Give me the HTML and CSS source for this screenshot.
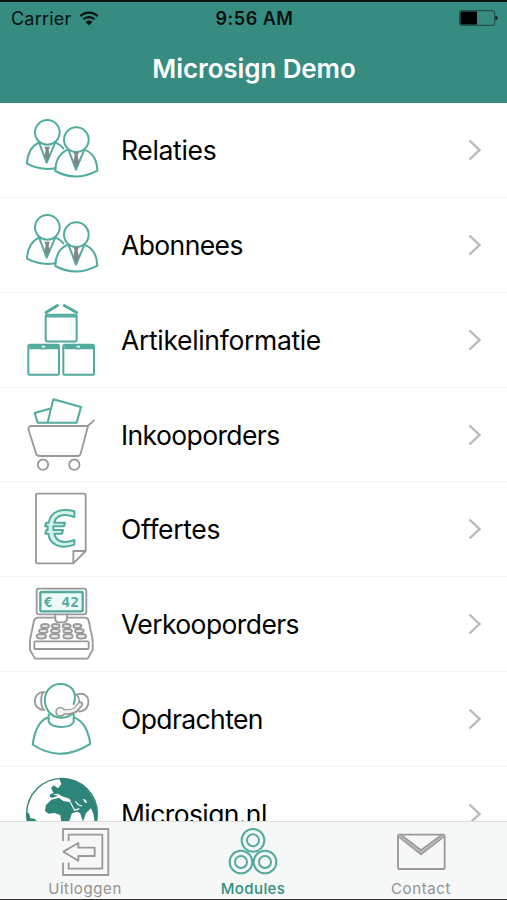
FILE: index.html
```html
<!DOCTYPE html>
<html lang="nl">
<head>
<meta charset="UTF-8">
<meta name="viewport" content="width=device-width, initial-scale=1.0">
<title>Microsign Demo</title>
<link rel="stylesheet" href="styles.css">
</head>
<body>

  <header class="header">
    <div class="status-bar">
      <div class="carrier">
        <span>Carrier</span>
        <svg class="wifi" viewBox="0 0 20 15">
          <path d="M1.4 5.1a12.2 12.2 0 0 1 17.2 0M4.5 8.3a7.8 7.8 0 0 1 11 0" fill="none" stroke="#06110f" stroke-width="2.3"/>
          <path d="M10 14.5L6.6 11a4.8 4.8 0 0 1 6.8 0z" fill="#06110f"/>
        </svg>
      </div>
      <div class="time">9:56 AM</div>
      <svg class="battery" viewBox="0 0 39 16">
        <rect x=".6" y=".6" width="35" height="14.8" rx="2.4" fill="none" stroke="#20524b" stroke-width="1.1"/>
        <path d="M3 1.5h15v13H3a1.5 1.5 0 0 1-1.5-1.5V3A1.5 1.5 0 0 1 3 1.5z" fill="#000"/>
        <path d="M36.4 5.5q2.4 1 2.4 2.5t-2.4 2.5z" fill="#0b1f1c"/>
      </svg>
    </div>
    <h1 class="title">Microsign Demo</h1>
  </header>

  <main class="list">
    <a class="row">
      <svg class="icon" viewBox="72 21 228 228">
        <g id="people" class="green">
          <circle cx="142" cy="82" r="37"/>
          <path d="M117 112C94 124 82 145 81 176Q120 197 166 190M166 112Q182 119 190 130M117 112L140 173L166 112"/>
          <path d="M133 125h17l-4 9 3 18-8 17-7-17 3-18z" class="tie"/>
          <circle cx="229" cy="104" r="37" fill="#fff"/>
          <path d="M205 133C181 143 166 165 166 198Q228 232 292 197C291 165 278 143 253 134M205 133L228 194L253 134"/>
          <path d="M220 142h17l-4 9 4 19-9 20-8-20 4-19z" class="tie"/>
        </g>
      </svg>
      <span class="label wide">Relaties</span>
      <svg class="arrow" viewBox="0 0 14 22"><path d="M1.5 1.5L11.5 11L1.5 20.5"/></svg>
    </a>

    <a class="row">
      <svg class="icon" viewBox="72 21 228 228"><use href="#people"/></svg>
      <span class="label">Abonnees</span>
      <svg class="arrow" viewBox="0 0 14 22"><path d="M1.5 1.5L11.5 11L1.5 20.5"/></svg>
    </a>

    <a class="row">
      <svg class="icon" viewBox="72 34.5 228 228">
        <g class="green">
          <rect x="137" y="73" width="93" height="80" rx="5"/>
          <path d="M139 78h89"/>
          <path d="M138 66L172 45M193 45L230 66" stroke-width="9"/>
          <rect x="85" y="163" width="92" height="90" rx="5"/>
          <rect x="190" y="163" width="92" height="90" rx="5"/>
          <path d="M88 170h37M135 170h39M193 170h37M240 170h39" stroke-width="13" stroke-linecap="butt"/>
          <path d="M125 174h10M230 174h10"/>
        </g>
      </svg>
      <span class="label wide">Artikelinformatie</span>
      <svg class="arrow" viewBox="0 0 14 22"><path d="M1.5 1.5L11.5 11L1.5 20.5"/></svg>
    </a>

    <a class="row">
      <svg class="icon" viewBox="72 34 228 228">
        <g class="green">
          <path d="M149 69L104 82L113 111H230L243 64L160 41L143 110"/>
        </g>
        <g class="gray">
          <path d="M282 104L263 121H95Q83 121 86 133L108 203Q111 211 119 211H232Q240 211 242 204L264 121"/>
          <circle cx="129" cy="237" r="15.5"/>
          <circle cx="223" cy="237" r="15.5"/>
        </g>
      </svg>
      <span class="label">Inkooporders</span>
      <svg class="arrow" viewBox="0 0 14 22"><path d="M1.5 1.5L11.5 11L1.5 20.5"/></svg>
    </a>

    <a class="row">
      <svg class="icon" viewBox="72 33 228 228">
        <g class="gray">
          <path d="M112 41H253Q257 41 257 45V213L220 250H112Q108 250 108 246V45Q108 41 112 41zM220 250V213H257"/>
        </g>
        <g class="green euro">
          <path d="M223 94V111C193 98 167 106 163 128H195L192 139H160V150H189L186 161H163C169 187 194 192 223 180V194C180 209 149 194 145 161H136L139 150H143V139H135L139 128H146C153 91 187 84 223 94z"/>
        </g>
      </svg>
      <span class="label wide">Offertes</span>
      <svg class="arrow" viewBox="0 0 14 22"><path d="M1.5 1.5L11.5 11L1.5 20.5"/></svg>
    </a>

    <a class="row">
      <svg class="icon" viewBox="72 26 228 228">
        <g class="gray">
          <rect x="110" y="34" width="149" height="77" rx="7"/>
          <path d="M166 121H114Q105 121 102 130L90 188V218L105 244H263L278 218V188L266 130Q264 121 254 121H201M166 112V126Q168 135 176 135H191Q201 134 201 126V112"/>
          <rect x="103" y="192" width="163" height="23" rx="3"/>
          <g fill="#e8e8e8">
            <ellipse cx="135" cy="146" rx="12" ry="6"/><ellipse cx="167" cy="146" rx="12" ry="6"/><ellipse cx="200" cy="146" rx="12" ry="6"/><ellipse cx="232" cy="146" rx="12" ry="6"/>
            <ellipse cx="130" cy="161" rx="13" ry="6"/><ellipse cx="166" cy="161" rx="13" ry="6"/><ellipse cx="203" cy="161" rx="13" ry="6"/><ellipse cx="238" cy="161" rx="13" ry="6"/>
            <ellipse cx="124" cy="177" rx="14" ry="7"/><ellipse cx="164" cy="177" rx="14" ry="7"/><ellipse cx="204" cy="177" rx="14" ry="7"/><ellipse cx="244" cy="177" rx="14" ry="7"/>
          </g>
        </g>
        <rect x="121" y="44" width="127" height="58" rx="3" fill="#eefaf7" stroke="#52ab9d" stroke-width="7"/>
        <text x="131" y="89" class="amount">€ 42</text>
      </svg>
      <span class="label">Verkooporders</span>
      <svg class="arrow" viewBox="0 0 14 22"><path d="M1.5 1.5L11.5 11L1.5 20.5"/></svg>
    </a>

    <a class="row">
      <svg class="icon" viewBox="72 31.5 228 228">
        <g class="gray">
          <path d="M133 65C95 62 95 120 133 118M128 67Q118 92 129 116M229 73C272 55 279 120 238 123M231 75Q239 84 238 94"/>
        </g>
        <g class="green">
          <path d="M221 124C206 145 165 151 145 122C127 97 134 65 151 51C171 35 202 38 217 56C227 68 227 82 221 101"/>
          <path d="M146 140Q108 151 98 222Q180 278 271 220C263 170 246 151 221 140M146 132V154C157 175 211 174 221 154V132"/>
        </g>
        <path d="M241 101L227 118Q215 126 187 124" fill="none" stroke="#999" stroke-width="17" stroke-linecap="round"/>
        <circle cx="181" cy="124" r="13" fill="#f6f6f6" stroke="#999" stroke-width="5"/>
        <path d="M240 102L226 117Q213 125 183 124" fill="none" stroke="#f2f2f2" stroke-width="8" stroke-linecap="round"/>
      </svg>
      <span class="label">Opdrachten</span>
      <svg class="arrow" viewBox="0 0 14 22"><path d="M1.5 1.5L11.5 11L1.5 20.5"/></svg>
    </a>

    <a class="row">
      <svg class="icon" viewBox="72 40 228 228">
        <circle cx="186" cy="153" r="106" fill="#fff" stroke="#2c8578" stroke-width="4"/>
        <g fill="#2c8578">
          <path d="M178 48C233 42 279 83 291 139V190H286L280 153L273 137L258 151L249 177L240 151L231 147L216 152L207 177V190H185L181 157L163 151L145 153L135 145L138 127L154 111L177 105L190 115L210 119L213 113L191 104L178 97L158 105L149 103L151 94L161 91L153 77L161 68L174 77L184 65z"/>
          <path d="M79 148L88 153L91 167L104 168L114 181V190H84Q78 168 79 148z"/>
        </g>
        <path d="M158 95L174 93L184 100L208 108L211 112L192 108L175 99zM248 108L258 112L261 122L254 119z" fill="#fff"/>
        <path d="M211 119L224 143L238 138M226 116L236 127L246 130" fill="none" stroke="#fff" stroke-width="3.5"/>
      </svg>
      <span class="label">Microsign.nl</span>
      <svg class="arrow" viewBox="0 0 14 22"><path d="M1.5 1.5L11.5 11L1.5 20.5"/></svg>
    </a>
  </main>

  <nav class="tabs">
    <a class="tab">
      <svg class="tab-icon gray" viewBox="180 195 150 150">
        <path d="M189 235V201H325V339H189V304M206 235V218H307V320H206V304"/>
        <path d="M190 269L235 243V257H284V282H235V296z"/>
      </svg>
      <span class="tab-label">Uitloggen</span>
    </a>
    <a class="tab active">
      <svg class="tab-icon green" viewBox="175 195 150 150">
        <circle cx="250" cy="235" r="34"/><circle cx="250" cy="235" r="18"/>
        <circle cx="214" cy="300" r="34"/><circle cx="214" cy="300" r="18"/>
        <circle cx="286" cy="300" r="34"/><circle cx="286" cy="300" r="18"/>
      </svg>
      <span class="tab-label">Modules</span>
    </a>
    <a class="tab">
      <svg class="tab-icon gray" viewBox="169 195 150 150">
        <rect x="175" y="218" width="140" height="103" rx="4"/>
        <path d="M176 223L244 277L314 223M184 219L244 265L306 219"/>
        <path d="M179 221L244 271L311 221" stroke="#b5b5b5"/>
      </svg>
      <span class="tab-label">Contact</span>
    </a>
  </nav>

</body>
</html>
```

FILE: styles.css
```css
* {
  box-sizing: border-box;
}

body {
  margin: 0;
  height: 900px;
  display: flex;
  flex-direction: column;
  overflow: hidden;
  background-color: #fff;
  font-family: Inter, "Liberation Sans", sans-serif;
  color: #000;
}

/* header */
.header {
  flex: none;
  height: 102.6px;
  background-color: #378c82;
  border-top: 2px solid #061412;
}

.status-bar {
  display: grid;
  grid-template-columns: 1fr auto 1fr;
  align-items: center;
  height: 32px;
  padding: 0 9px 0 11px;
  font-size: 18px;
  color: #06110f;
}

.carrier {
  display: flex;
  align-items: center;
  gap: 8px;
  letter-spacing: 0.2px;
}

.wifi {
  width: 20px;
  height: 15px;
}

.time {
  font-weight: 600;
  letter-spacing: 0.5px;
}

.battery {
  width: 39px;
  height: 16px;
  justify-self: end;
}

.title {
  margin: 0;
  padding: 18px 0 0 1px;
  text-align: center;
  font-size: 26px;
  line-height: 34px;
  font-weight: 600;
  letter-spacing: -0.1px;
  color: #fff;
}

/* list */
.list {
  flex: 1;
  min-height: 0;
  padding-top: 0.9px;
  overflow: hidden;
}

.row {
  display: flex;
  align-items: center;
  height: 94.75px;
  padding: 0 25px 0 24px;
  border-bottom: 1px solid #f1f4f3;
}

.icon {
  flex: none;
  width: 76px;
  height: 76px;
}

.label {
  flex: 1;
  margin-left: 21px;
  font-size: 26.5px;
  letter-spacing: -0.6px;
}

.wide {
  letter-spacing: -0.33px;
}

.arrow {
  width: 14px;
  height: 22px;
  fill: none;
  stroke: #bababa;
  stroke-width: 2.4;
}

.green,
.gray {
  fill: none;
  stroke: #52ab9d;
  stroke-width: 6;
  stroke-linecap: round;
  stroke-linejoin: round;
}

.gray {
  stroke: #999;
  stroke-width: 5.5;
}

.tie {
  fill: #858585;
  stroke: none;
}

.euro {
  fill: #d5f2ec;
}

.amount {
  font-family: "DejaVu Sans Mono", monospace;
  font-size: 44px;
  font-weight: bold;
  fill: #52ab9d;
  stroke: none;
}

/* tab bar */
.tabs {
  flex: none;
  display: flex;
  height: 79px;
  padding: 0 2px 0 1px;
  background-color: #f6f7f7;
  border-top: 1px solid #dcdcdc;
  border-bottom: 1px solid #333;
}

.tab {
  flex: 1;
  display: flex;
  flex-direction: column;
  align-items: center;
  padding-top: 5px;
  color: #929292;
}

.tab-icon {
  width: 50px;
  height: 50px;
}

.tab-label {
  margin-top: 3px;
  font-size: 15px;
  line-height: 18px;
  letter-spacing: 0.6px;
}

.active {
  color: #2f8f81;
}

.active .tab-label {
  font-weight: 500;
  letter-spacing: 0.4px;
}
```
